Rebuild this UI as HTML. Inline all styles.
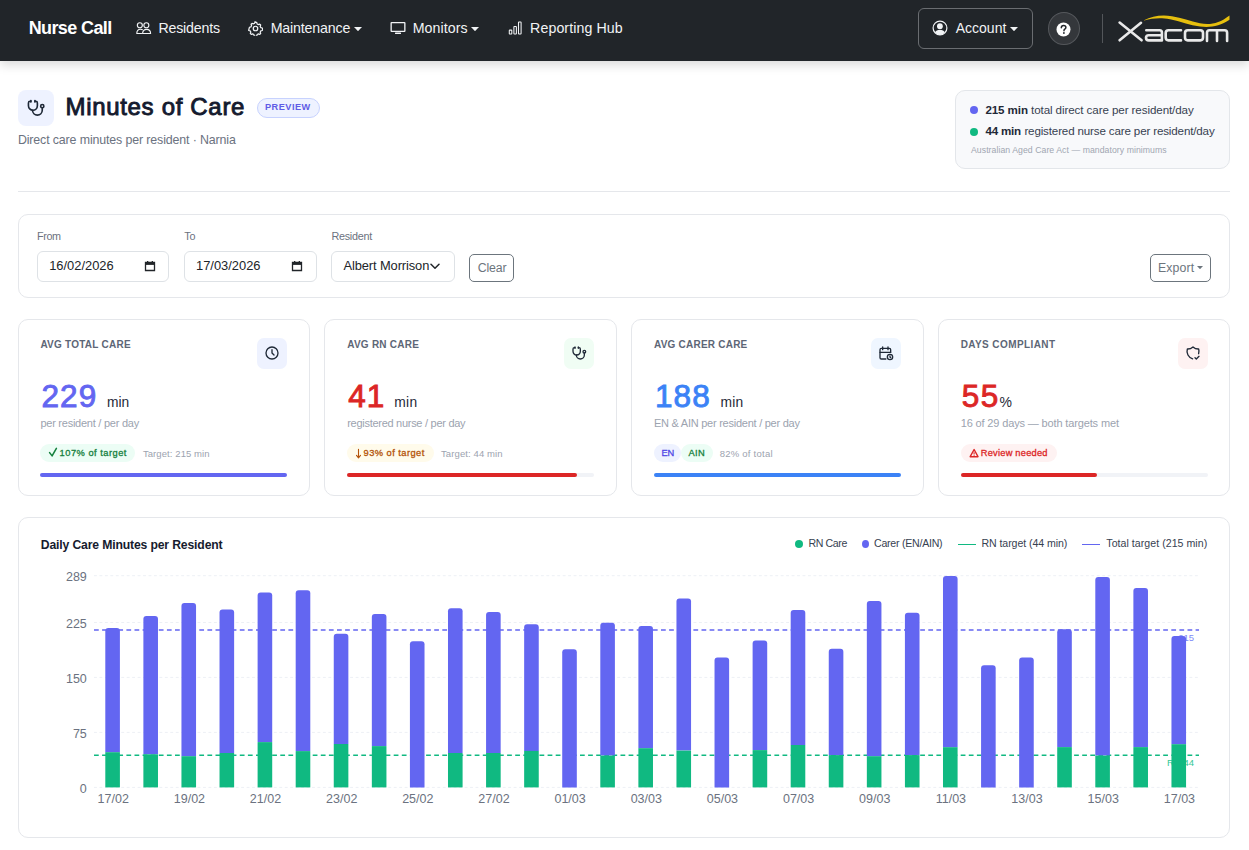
<!DOCTYPE html>
<html><head><meta charset="utf-8"><title>Minutes of Care</title>
<style>
html,body{margin:0;padding:0;background:#fff;width:1249px;height:850px;overflow:hidden}
body{position:relative;font-family:"Liberation Sans",sans-serif}
.t{position:absolute;white-space:nowrap}
.b{position:absolute;box-sizing:border-box}
</style></head><body>
<div class="b" style="left:0px;top:0px;width:1249px;height:61px;background:#212529;box-shadow:0 4px 10px rgba(0,0,0,.15);z-index:2"></div>
<div style="position:absolute;left:0;top:0;width:1249px;height:61px;z-index:3"><div class="t" style="left:28.70px;top:17.26px;font-size:18px;line-height:22px;color:#ffffff;font-weight:700;letter-spacing:-0.613px;">Nurse Call</div>
<svg class="b" style="left:130px;top:15px;" width="40" height="25" viewBox="0 0 40 25" fill="none"><g stroke="#f1f3f5" stroke-width="1.15" fill="none" stroke-linecap="round" stroke-linejoin="round"><circle cx="9.85" cy="10.25" r="2.5"/><circle cx="16.35" cy="10.25" r="2.5"/><path d="M12.6 18.5C12.6 15.7 14.4 14.3 16.6 14.3S20.6 15.7 20.6 18.5Z"/><path d="M11.6 18.5H6.8C6.8 16 8.4 14.3 10.6 14.3C11.3 14.3 11.9 14.45 12.4 14.7"/></g></svg>
<div class="t" style="left:158.40px;top:19.98px;font-size:14.2px;line-height:17px;color:#f1f3f5;letter-spacing:-0.183px;">Residents</div>
<svg class="b" style="left:248.3px;top:20.6px;" width="15" height="15" viewBox="0 0 16 16" fill="none"><g stroke="#f1f3f5" stroke-width="1.3" fill="none"><path d="M8 1.2l1.3.3.4 1.6 1.2.7 1.6-.5 1 1-.5 1.6.7 1.2 1.6.4.3 1.3-.3 1.3-1.6.4-.7 1.2.5 1.6-1 1-1.6-.5-1.2.7-.4 1.6-1.3.3-1.3-.3-.4-1.6-1.2-.7-1.6.5-1-1 .5-1.6-.7-1.2-1.6-.4L1.2 8l.3-1.3 1.6-.4.7-1.2-.5-1.6 1-1 1.6.5 1.2-.7.4-1.6z" stroke-linejoin="round"/><circle cx="8" cy="8" r="2.4"/></g></svg>
<div class="t" style="left:270.70px;top:19.98px;font-size:14.2px;line-height:17px;color:#f1f3f5;letter-spacing:-0.165px;">Maintenance</div>
<svg class="b" style="left:354.2px;top:26.6px;" width="8" height="4.4" viewBox="0 0 8 4.4" fill="none"><path d="M0 0H8L4 4.2z" fill="#f1f3f5"/></svg>
<svg class="b" style="left:390px;top:21px;" width="16" height="14" viewBox="0 0 16 14" fill="none"><g fill="#f1f3f5"><path d="M1.5 1h13a1 1 0 0 1 1 1v8a1 1 0 0 1-1 1h-13a1 1 0 0 1-1-1V2a1 1 0 0 1 1-1zm.3 1.3v7.4h12.4V2.3z"/><rect x="5" y="11.5" width="6" height="1.6" rx=".5"/></g></svg>
<div class="t" style="left:412.70px;top:19.98px;font-size:14.2px;line-height:17px;color:#f1f3f5;letter-spacing:0.081px;">Monitors</div>
<svg class="b" style="left:471.1px;top:26.6px;" width="8" height="4.4" viewBox="0 0 8 4.4" fill="none"><path d="M0 0H8L4 4.2z" fill="#f1f3f5"/></svg>
<svg class="b" style="left:508px;top:21px;" width="15" height="14" viewBox="0 0 15 14" fill="none"><g stroke="#f1f3f5" stroke-width="1.05" fill="none"><rect x="1.3" y="9.1" width="2.5" height="3.9" rx=".5"/><rect x="5.9" y="5.4" width="2.5" height="7.6" rx=".5"/><rect x="10.5" y="0.9" width="2.6" height="12.1" rx=".5"/></g></svg>
<div class="t" style="left:530.10px;top:19.98px;font-size:14.2px;line-height:17px;color:#f1f3f5;letter-spacing:0.087px;">Reporting Hub</div>
<div class="b" style="left:918px;top:8px;width:115px;height:41px;border:1px solid #6a6d71;border-radius:6px;box-sizing:border-box"></div>
<svg class="b" style="left:932.0px;top:20px;" width="16" height="16" viewBox="0 0 16 16" fill="none"><circle cx="8" cy="8" r="6.9" stroke="#f1f3f5" stroke-width="1.2" fill="none"/><circle cx="7.9" cy="6.2" r="2.9" fill="#f1f3f5"/><path d="M2.9 12.4C3.8 10.7 5.6 9.8 7.9 9.8S12 10.7 12.9 12.4A7 7 0 0 1 7.9 15A7 7 0 0 1 2.9 12.4z" fill="#f1f3f5"/></svg>
<div class="t" style="left:955.80px;top:20.05px;font-size:14px;line-height:17px;color:#f1f3f5;letter-spacing:-0.012px;">Account</div>
<svg class="b" style="left:1010.1px;top:26.6px;" width="8" height="4.4" viewBox="0 0 8 4.4" fill="none"><path d="M0 0H8L4 4.2z" fill="#f1f3f5"/></svg>
<div class="b" style="left:1048px;top:12px;width:32px;height:33px;border:1px solid #55585c;background:#34373b;border-radius:50%;box-sizing:border-box"></div>
<svg class="b" style="left:1056px;top:21.6px;" width="15" height="15" viewBox="0 0 15 15" fill="none"><circle cx="7.5" cy="7.5" r="7" fill="#fff"/><path d="M5.3 5.7c0-1.4 1-2.3 2.3-2.3 1.3 0 2.3.8 2.3 2 0 .9-.5 1.3-1.1 1.7-.6.4-.8.6-.8 1.3v.3" stroke="#212529" stroke-width="1.45" fill="none" stroke-linecap="round"/><circle cx="7.9" cy="11" r=".9" fill="#212529"/></svg>
<div class="b" style="left:1102px;top:14px;width:1px;height:29px;background:#53565a"></div>
<svg class="b" style="left:1112px;top:10px;" width="123" height="36" viewBox="0 0 123 36" fill="none"><path d="M32 10.3C40 6 50 4.6 60 6.3S78 11.2 88 13.2S107 13.5 117.5 5.4V9.8C108 16.5 98 17.8 88 16.6S68 11.2 58 9.3S41 8.2 32 10.6z" fill="#e6bf0e"/>
<g stroke="#e9e9e9" stroke-width="2.6" fill="none" stroke-linecap="round" stroke-linejoin="round">
<path d="M7.6 12.6L29.6 30.3M7.6 30.3L29 12.8"/>
<path d="M34.3 20.2H47.7Q49.9 20.2 49.9 22.4V30.4H36.8Q34 30.4 34 27.8Q34 25.2 36.8 25.2H49.9"/>
<path d="M69 20.2H56.4Q53.7 20.2 53.7 23V27.6Q53.7 30.4 56.4 30.4H69"/>
<path d="M75.7 20.2H88.3Q91 20.2 91 23V27.6Q91 30.4 88.3 30.4H75.7Q73 30.4 73 27.6V23Q73 20.2 75.7 20.2z"/>
<path d="M95 31V22.7Q95 20.2 97.5 20.2H112.6Q115.1 20.2 115.1 22.7V31M105 20.2V31"/>
</g></svg>
</div><div class="b" style="left:18px;top:90px;width:36px;height:36px;background:#eef2ff;border-radius:8px"></div>
<svg class="b" style="left:26.2px;top:97.7px;" width="19.5" height="19.5" viewBox="0 0 24 24" fill="none"><g stroke="#1f2937" stroke-width="2" fill="none" stroke-linecap="round" stroke-linejoin="round"><path d="M6 4h-1a2 2 0 0 0 -2 2v3.5a5.5 5.5 0 0 0 11 0v-3.5a2 2 0 0 0 -2 -2h-1"/><path d="M8 15a6 6 0 1 0 12 0v-3"/><path d="M11 3v2"/><path d="M6 3v2"/><circle cx="20" cy="10" r="2"/></g></svg>
<div class="t" style="left:65.50px;top:92.18px;font-size:24px;line-height:29px;color:#141a2e;letter-spacing:0.679px;-webkit-text-stroke:0.9px #141a2e;">Minutes of Care</div>
<div class="b" style="left:257px;top:98px;width:63px;height:20px;background:#eef2ff;border:1px solid #c7d2fe;border-radius:10px;box-sizing:border-box"></div>
<div class="t" style="left:265.00px;top:101.91px;font-size:9.2px;line-height:11px;color:#5f5ce6;font-weight:700;letter-spacing:0.481px;">PREVIEW</div>
<div class="t" style="left:17.90px;top:132.70px;font-size:12.4px;line-height:15px;color:#6b7280;letter-spacing:-0.129px;">Direct care minutes per resident · Narnia</div>
<div class="b" style="left:955px;top:90px;width:275px;height:79px;background:#f8f9fb;border:1px solid #e3e6ea;border-radius:10px;box-sizing:border-box"></div>
<div class="b" style="left:970px;top:106px;width:8px;height:8px;background:#6366f1;border-radius:50%"></div>
<div class="b" style="left:970px;top:128px;width:8px;height:8px;background:#10b981;border-radius:50%"></div>
<div class="t" style="left:985.40px;top:103.48px;font-size:11.6px;line-height:14px;color:#1f2937;font-weight:700;letter-spacing:-0.100px;">215 min</div>
<div class="t" style="left:1031.00px;top:103.48px;font-size:11.6px;line-height:14px;color:#374151;letter-spacing:-0.086px;">total direct care per resident/day</div>
<div class="t" style="left:985.40px;top:124.48px;font-size:11.6px;line-height:14px;color:#1f2937;font-weight:700;letter-spacing:-0.208px;">44 min</div>
<div class="t" style="left:1024.40px;top:124.48px;font-size:11.6px;line-height:14px;color:#374151;letter-spacing:-0.151px;">registered nurse care per resident/day</div>
<div class="t" style="left:971.00px;top:145.29px;font-size:8.7px;line-height:10px;color:#a0a6b1;letter-spacing:0.057px;">Australian Aged Care Act — mandatory minimums</div>
<div class="b" style="left:18px;top:191px;width:1212px;height:1px;background:#e5e7eb"></div>
<div class="b" style="left:18px;top:214px;width:1212px;height:84px;border:1px solid #e5e7eb;border-radius:10px;box-sizing:border-box"></div>
<div class="t" style="left:36.90px;top:230.46px;font-size:10.8px;line-height:13px;color:#6b7280;letter-spacing:-0.349px;">From</div>
<div class="t" style="left:184.20px;top:230.46px;font-size:10.8px;line-height:13px;color:#6b7280;">To</div>
<div class="t" style="left:331.40px;top:230.46px;font-size:10.8px;line-height:13px;color:#6b7280;letter-spacing:-0.241px;">Resident</div>
<div class="b" style="left:37px;top:251px;width:132px;height:31px;border:1px solid #dee2e6;border-radius:6px;box-sizing:border-box;background:#fff"></div>
<div class="b" style="left:184px;top:251px;width:133px;height:31px;border:1px solid #dee2e6;border-radius:6px;box-sizing:border-box;background:#fff"></div>
<div class="b" style="left:331px;top:251px;width:124px;height:31px;border:1px solid #dee2e6;border-radius:6px;box-sizing:border-box;background:#fff"></div>
<div class="t" style="left:49.20px;top:258.43px;font-size:12.9px;line-height:15px;color:#212529;">16/02/2026</div>
<svg class="b" style="left:143.5px;top:259.5px;" width="12" height="12" viewBox="0 0 12 12" fill="none"><path d="M1.5 2.5h9v8h-9z" stroke="#212529" stroke-width="1.3" fill="none"/><rect x="1.5" y="2.5" width="9" height="2.4" fill="#212529"/><rect x="3" y="1" width="1.3" height="2" fill="#212529"/><rect x="7.7" y="1" width="1.3" height="2" fill="#212529"/></svg>
<div class="t" style="left:196.00px;top:258.43px;font-size:12.9px;line-height:15px;color:#212529;">17/03/2026</div>
<svg class="b" style="left:290.5px;top:259.5px;" width="12" height="12" viewBox="0 0 12 12" fill="none"><path d="M1.5 2.5h9v8h-9z" stroke="#212529" stroke-width="1.3" fill="none"/><rect x="1.5" y="2.5" width="9" height="2.4" fill="#212529"/><rect x="3" y="1" width="1.3" height="2" fill="#212529"/><rect x="7.7" y="1" width="1.3" height="2" fill="#212529"/></svg>
<div class="t" style="left:343.50px;top:258.43px;font-size:12.9px;line-height:15px;color:#212529;letter-spacing:-0.111px;">Albert Morrison</div>
<svg class="b" style="left:429.5px;top:263px;" width="10" height="7" viewBox="0 0 10 7" fill="none"><path d="M1 1.2l4 4 4-4" stroke="#212529" stroke-width="1.5" fill="none" stroke-linecap="round" stroke-linejoin="round"/></svg>
<div class="b" style="left:469px;top:254px;width:45px;height:28px;border:1px solid #6c757d;border-radius:5px;box-sizing:border-box"></div>
<div class="t" style="left:477.80px;top:260.74px;font-size:12.3px;line-height:15px;color:#6c757d;letter-spacing:-0.159px;">Clear</div>
<div class="b" style="left:1150px;top:254px;width:61px;height:28px;border:1px solid #6c757d;border-radius:5px;box-sizing:border-box"></div>
<div class="t" style="left:1157.90px;top:260.74px;font-size:12.3px;line-height:15px;color:#6c757d;letter-spacing:0.158px;">Export</div>
<svg class="b" style="left:1197.2px;top:265.6px;" width="6" height="3.4" viewBox="0 0 6 3.4" fill="none"><path d="M0 0H6L3 3.2z" fill="#6c757d"/></svg>
<div class="b" style="left:18px;top:319px;width:292px;height:177px;border:1px solid #e5e7eb;border-radius:10px;box-sizing:border-box;background:#fff"></div>
<div class="t" style="left:40.40px;top:339.04px;font-size:10px;line-height:12px;color:#5d6676;font-weight:700;letter-spacing:0.240px;">AVG TOTAL CARE</div>
<div class="b" style="left:257px;top:338px;width:30px;height:31px;background:#eef2ff;border-radius:7px"></div>
<svg class="b" style="left:264.0px;top:344.6px;" width="16" height="16" viewBox="0 0 24 24" fill="none"><g stroke="#1f2937" stroke-width="2" fill="none" stroke-linecap="round" stroke-linejoin="round"><circle cx="12" cy="12" r="9"/><path d="M12 7v5l3 3"/></g></svg>
<div class="t" style="left:41.40px;top:377.39px;font-size:31.5px;line-height:38px;color:#6366f1;letter-spacing:1.147px;-webkit-text-stroke:0.9px #6366f1;">229</div>
<div class="t" style="left:107.00px;top:394.22px;font-size:13.8px;line-height:17px;color:#1f2937;letter-spacing:-0.046px;">min</div>
<div class="t" style="left:40.40px;top:416.89px;font-size:11px;line-height:13px;color:#9ca3af;letter-spacing:-0.248px;">per resident / per day</div>
<div class="b" style="left:40px;top:444px;width:95px;height:18px;background:#ecfdf5;border-radius:9px"></div>
<div class="t" style="left:59.60px;top:448.08px;font-size:9.3px;line-height:11px;color:#15803d;letter-spacing:0.486px;-webkit-text-stroke:0.3px #15803d;">107% of target</div>
<svg class="b" style="left:48px;top:447px;" width="10" height="10" viewBox="0 0 10 10" fill="none"><path d="M1.6 5.6L4.1 8.9L8.4 1.3" stroke="#15803d" stroke-width="1.55" fill="none" stroke-linecap="round" stroke-linejoin="round"/></svg>
<div class="t" style="left:142.90px;top:448.01px;font-size:9.5px;line-height:11px;color:#9ca3af;letter-spacing:0.088px;">Target: 215 min</div>
<div class="b" style="left:40px;top:473px;width:247px;height:4px;background:#6366f1;border-radius:2px"></div>
<div class="b" style="left:324px;top:319px;width:293px;height:177px;border:1px solid #e5e7eb;border-radius:10px;box-sizing:border-box;background:#fff"></div>
<div class="t" style="left:347.20px;top:339.04px;font-size:10px;line-height:12px;color:#5d6676;font-weight:700;letter-spacing:0.249px;">AVG RN CARE</div>
<div class="b" style="left:564px;top:338px;width:30px;height:31px;background:#f0fdf4;border-radius:7px"></div>
<svg class="b" style="left:571.3px;top:344.6px;" width="16" height="16" viewBox="0 0 24 24" fill="none"><g stroke="#1f2937" stroke-width="2" fill="none" stroke-linecap="round" stroke-linejoin="round"><path d="M6 4h-1a2 2 0 0 0 -2 2v3.5a5.5 5.5 0 0 0 11 0v-3.5a2 2 0 0 0 -2 -2h-1"/><path d="M8 15a6 6 0 1 0 12 0v-3"/><path d="M11 3v2"/><path d="M6 3v2"/><circle cx="20" cy="10" r="2"/></g></svg>
<div class="t" style="left:348.20px;top:377.39px;font-size:31.5px;line-height:38px;color:#dc2626;letter-spacing:0.981px;-webkit-text-stroke:0.9px #dc2626;">41</div>
<div class="t" style="left:394.30px;top:394.22px;font-size:13.8px;line-height:17px;color:#1f2937;letter-spacing:0.288px;">min</div>
<div class="t" style="left:347.20px;top:416.89px;font-size:11px;line-height:13px;color:#9ca3af;letter-spacing:-0.279px;">registered nurse / per day</div>
<div class="b" style="left:347px;top:444px;width:87px;height:18px;background:#fffbeb;border-radius:9px"></div>
<div class="t" style="left:363.60px;top:448.08px;font-size:9.3px;line-height:11px;color:#b45309;letter-spacing:0.452px;-webkit-text-stroke:0.3px #b45309;">93% of target</div>
<svg class="b" style="left:355px;top:448px;" width="7" height="11" viewBox="0 0 7 11" fill="none"><path d="M3.5 1.2V9.6M1.5 7.4L3.5 9.8L5.5 7.4" stroke="#b45309" stroke-width="1.1" fill="none" stroke-linecap="round" stroke-linejoin="round"/></svg>
<div class="t" style="left:441.00px;top:448.01px;font-size:9.5px;line-height:11px;color:#9ca3af;letter-spacing:0.107px;">Target: 44 min</div>
<div class="b" style="left:347px;top:473px;width:247px;height:4px;background:#f1f3f7;border-radius:2px"></div>
<div class="b" style="left:347px;top:473px;width:230px;height:4px;background:#dc2626;border-radius:2px"></div>
<div class="b" style="left:631px;top:319px;width:293px;height:177px;border:1px solid #e5e7eb;border-radius:10px;box-sizing:border-box;background:#fff"></div>
<div class="t" style="left:654.00px;top:339.04px;font-size:10px;line-height:12px;color:#5d6676;font-weight:700;letter-spacing:0.223px;">AVG CARER CARE</div>
<div class="b" style="left:871px;top:338px;width:30px;height:31px;background:#eff6ff;border-radius:7px"></div>
<svg class="b" style="left:878.0999999999999px;top:344.6px;" width="16" height="16" viewBox="0 0 24 24" fill="none"><g stroke="#1f2937" stroke-width="2" fill="none" stroke-linecap="round" stroke-linejoin="round"><path d="M11.8 21h-6.8a2 2 0 0 1 -2 -2v-12a2 2 0 0 1 2 -2h12a2 2 0 0 1 2 2v4"/><circle cx="18" cy="18" r="4"/><path d="M15 3v4"/><path d="M7 3v4"/><path d="M3 11h16"/><path d="M18 16.5v1.5l1 1"/></g></svg>
<div class="t" style="left:655.00px;top:377.39px;font-size:31.5px;line-height:38px;color:#3b82f6;letter-spacing:1.081px;-webkit-text-stroke:0.9px #3b82f6;">188</div>
<div class="t" style="left:720.60px;top:394.22px;font-size:13.8px;line-height:17px;color:#1f2937;letter-spacing:0.188px;">min</div>
<div class="t" style="left:654.00px;top:416.89px;font-size:11px;line-height:13px;color:#9ca3af;letter-spacing:-0.251px;">EN &amp; AIN per resident / per day</div>
<div class="b" style="left:654px;top:444px;width:27px;height:18px;background:#eef2ff;border-radius:9px"></div>
<div class="t" style="left:661.40px;top:448.08px;font-size:9.3px;line-height:11px;color:#4f46e5;letter-spacing:-0.210px;-webkit-text-stroke:0.3px #4f46e5;">EN</div>
<div class="b" style="left:681px;top:444px;width:32px;height:18px;background:#ecfdf5;border-radius:9px"></div>
<div class="t" style="left:688.50px;top:448.08px;font-size:9.3px;line-height:11px;color:#15803d;letter-spacing:0.399px;-webkit-text-stroke:0.3px #15803d;">AIN</div>
<div class="t" style="left:719.70px;top:448.01px;font-size:9.5px;line-height:11px;color:#9ca3af;letter-spacing:0.244px;">82% of total</div>
<div class="b" style="left:654px;top:473px;width:247px;height:4px;background:#3b82f6;border-radius:2px"></div>
<div class="b" style="left:938px;top:319px;width:292px;height:177px;border:1px solid #e5e7eb;border-radius:10px;box-sizing:border-box;background:#fff"></div>
<div class="t" style="left:960.70px;top:339.04px;font-size:10px;line-height:12px;color:#5d6676;font-weight:700;letter-spacing:0.408px;">DAYS COMPLIANT</div>
<div class="b" style="left:1178px;top:338px;width:30px;height:31px;background:#fef2f2;border-radius:7px"></div>
<svg class="b" style="left:1185.0px;top:344.6px;" width="16" height="16" viewBox="0 0 24 24" fill="none"><g stroke="#1f2937" stroke-width="2" fill="none" stroke-linecap="round" stroke-linejoin="round"><path d="M11.46 20.846a12 12 0 0 1 -7.96 -14.846a12 12 0 0 0 8.5 -3a12 12 0 0 0 8.5 3a12 12 0 0 1 -.09 7.06"/><path d="M15 19l2 2l4 -4"/></g></svg>
<div class="t" style="left:961.70px;top:377.39px;font-size:31.5px;line-height:38px;color:#dc2626;letter-spacing:1.631px;-webkit-text-stroke:0.9px #dc2626;">55</div>
<div class="t" style="left:999.50px;top:394.15px;font-size:14px;line-height:17px;color:#1f2937;letter-spacing:0.352px;">%</div>
<div class="t" style="left:960.70px;top:416.89px;font-size:11px;line-height:13px;color:#9ca3af;letter-spacing:-0.142px;">16 of 29 days — both targets met</div>
<div class="b" style="left:961px;top:444px;width:96px;height:18px;background:#fef2f2;border-radius:9px"></div>
<div class="t" style="left:980.80px;top:448.08px;font-size:9.3px;line-height:11px;color:#dc2626;letter-spacing:0.214px;-webkit-text-stroke:0.3px #dc2626;">Review needed</div>
<svg class="b" style="left:968.5px;top:447.5px;" width="10.5" height="10" viewBox="0 0 10.5 10" fill="none"><path d="M5.1 1.5L9.0 8.7H1.2z" stroke="#dc2626" stroke-width="1.4" fill="none" stroke-linejoin="round"/><path d="M5.1 4.3V6.5" stroke="#dc2626" stroke-width="1.1"/><circle cx="5.1" cy="7.6" r=".55" fill="#dc2626"/></svg>
<div class="b" style="left:961px;top:473px;width:247px;height:4px;background:#f1f3f7;border-radius:2px"></div>
<div class="b" style="left:961px;top:473px;width:136px;height:4px;background:#dc2626;border-radius:2px"></div>
<div class="b" style="left:18px;top:517px;width:1212px;height:321px;border:1px solid #e5e7eb;border-radius:10px;box-sizing:border-box;background:#fff"></div>
<div class="t" style="left:40.80px;top:537.97px;font-size:12.2px;line-height:15px;color:#161b2e;font-weight:700;letter-spacing:-0.147px;">Daily Care Minutes per Resident</div>
<div class="b" style="left:795px;top:540px;width:8px;height:8px;background:#10b981;border-radius:50%"></div>
<div class="t" style="left:808.50px;top:537.23px;font-size:10.6px;line-height:13px;color:#374151;letter-spacing:-0.390px;">RN Care</div>
<div class="b" style="left:862px;top:540px;width:7px;height:8px;background:#6366f1;border-radius:50%"></div>
<div class="t" style="left:874.00px;top:537.23px;font-size:10.6px;line-height:13px;color:#374151;letter-spacing:-0.247px;">Carer (EN/AIN)</div>
<div class="b" style="left:958px;top:544px;width:18px;height:1px;background:#10b981"></div>
<div class="t" style="left:981.40px;top:537.23px;font-size:10.6px;line-height:13px;color:#374151;letter-spacing:-0.066px;">RN target (44 min)</div>
<div class="b" style="left:1082px;top:544px;width:18px;height:1px;background:#6366f1"></div>
<div class="t" style="left:1106.30px;top:537.23px;font-size:10.6px;line-height:13px;color:#374151;letter-spacing:0.038px;">Total target (215 min)</div>
<svg class="b" style="left:0;top:0" width="1249" height="850" viewBox="0 0 1249 850"><line x1="94" y1="575.7" x2="1199" y2="575.7" stroke="#edf0f5" stroke-width="1" stroke-dasharray="2.9 2.55"/><line x1="94" y1="622.5" x2="1199" y2="622.5" stroke="#edf0f5" stroke-width="1" stroke-dasharray="2.9 2.55"/><line x1="94" y1="677.4" x2="1199" y2="677.4" stroke="#edf0f5" stroke-width="1" stroke-dasharray="2.9 2.55"/><line x1="94" y1="732.4" x2="1199" y2="732.4" stroke="#edf0f5" stroke-width="1" stroke-dasharray="2.9 2.55"/><line x1="94" y1="787.4" x2="1199" y2="787.4" stroke="#edf0f5" stroke-width="1" stroke-dasharray="2.9 2.55"/><line x1="94" y1="630.1" x2="1199" y2="630.1" stroke="#6366f1" stroke-width="1.5" stroke-dasharray="4.75 3.35"/><line x1="94" y1="755.2" x2="1199" y2="755.2" stroke="#10b981" stroke-width="1.5" stroke-dasharray="4.75 3.35"/><text x="1194" y="641" font-family="Liberation Sans" font-size="9.5" fill="#818cf8" text-anchor="end">215</text><text x="1194" y="766" font-family="Liberation Sans" font-size="9.5" fill="#34c796" text-anchor="end">RN 44</text><path d="M105.30 752.20V631.00Q105.30 628.00 108.30 628.00H116.90Q119.90 628.00 119.90 631.00V752.20z" fill="#6366f1"/><rect x="105.30" y="752.20" width="14.6" height="35.20" fill="#10b981"/><path d="M143.38 754.30V619.10Q143.38 616.10 146.38 616.10H154.98Q157.98 616.10 157.98 619.10V754.30z" fill="#6366f1"/><rect x="143.38" y="754.30" width="14.6" height="33.10" fill="#10b981"/><path d="M181.45 756.20V605.90Q181.45 602.90 184.45 602.90H193.05Q196.05 602.90 196.05 605.90V756.20z" fill="#6366f1"/><rect x="181.45" y="756.20" width="14.6" height="31.20" fill="#10b981"/><path d="M219.53 753.00V612.50Q219.53 609.50 222.53 609.50H231.13Q234.13 609.50 234.13 612.50V753.00z" fill="#6366f1"/><rect x="219.53" y="753.00" width="14.6" height="34.40" fill="#10b981"/><path d="M257.61 742.10V595.50Q257.61 592.50 260.61 592.50H269.21Q272.21 592.50 272.21 595.50V742.10z" fill="#6366f1"/><rect x="257.61" y="742.10" width="14.6" height="45.30" fill="#10b981"/><path d="M295.69 751.10V593.20Q295.69 590.20 298.69 590.20H307.29Q310.29 590.20 310.29 593.20V751.10z" fill="#6366f1"/><rect x="295.69" y="751.10" width="14.6" height="36.30" fill="#10b981"/><path d="M333.76 744.00V636.80Q333.76 633.80 336.76 633.80H345.36Q348.36 633.80 348.36 636.80V744.00z" fill="#6366f1"/><rect x="333.76" y="744.00" width="14.6" height="43.40" fill="#10b981"/><path d="M371.84 746.10V617.00Q371.84 614.00 374.84 614.00H383.44Q386.44 614.00 386.44 617.00V746.10z" fill="#6366f1"/><rect x="371.84" y="746.10" width="14.6" height="41.30" fill="#10b981"/><path d="M409.92 787.40V644.20Q409.92 641.20 412.92 641.20H421.52Q424.52 641.20 424.52 644.20V787.40z" fill="#6366f1"/><path d="M447.99 753.00V611.20Q447.99 608.20 450.99 608.20H459.59Q462.59 608.20 462.59 611.20V753.00z" fill="#6366f1"/><rect x="447.99" y="753.00" width="14.6" height="34.40" fill="#10b981"/><path d="M486.07 753.00V614.90Q486.07 611.90 489.07 611.90H497.67Q500.67 611.90 500.67 614.90V753.00z" fill="#6366f1"/><rect x="486.07" y="753.00" width="14.6" height="34.40" fill="#10b981"/><path d="M524.15 750.90V627.30Q524.15 624.30 527.15 624.30H535.75Q538.75 624.30 538.75 627.30V750.90z" fill="#6366f1"/><rect x="524.15" y="750.90" width="14.6" height="36.50" fill="#10b981"/><path d="M562.22 787.40V652.20Q562.22 649.20 565.22 649.20H573.82Q576.82 649.20 576.82 652.20V787.40z" fill="#6366f1"/><path d="M600.30 755.60V625.70Q600.30 622.70 603.30 622.70H611.90Q614.90 622.70 614.90 625.70V755.60z" fill="#6366f1"/><rect x="600.30" y="755.60" width="14.6" height="31.80" fill="#10b981"/><path d="M638.38 748.20V628.90Q638.38 625.90 641.38 625.90H649.98Q652.98 625.90 652.98 628.90V748.20z" fill="#6366f1"/><rect x="638.38" y="748.20" width="14.6" height="39.20" fill="#10b981"/><path d="M676.46 750.60V601.60Q676.46 598.60 679.46 598.60H688.06Q691.06 598.60 691.06 601.60V750.60z" fill="#6366f1"/><rect x="676.46" y="750.60" width="14.6" height="36.80" fill="#10b981"/><path d="M714.53 787.40V660.40Q714.53 657.40 717.53 657.40H726.13Q729.13 657.40 729.13 660.40V787.40z" fill="#6366f1"/><path d="M752.61 750.10V643.50Q752.61 640.50 755.61 640.50H764.21Q767.21 640.50 767.21 643.50V750.10z" fill="#6366f1"/><rect x="752.61" y="750.10" width="14.6" height="37.30" fill="#10b981"/><path d="M790.69 745.00V613.00Q790.69 610.00 793.69 610.00H802.29Q805.29 610.00 805.29 613.00V745.00z" fill="#6366f1"/><rect x="790.69" y="745.00" width="14.6" height="42.40" fill="#10b981"/><path d="M828.76 755.10V651.70Q828.76 648.70 831.76 648.70H840.36Q843.36 648.70 843.36 651.70V755.10z" fill="#6366f1"/><rect x="828.76" y="755.10" width="14.6" height="32.30" fill="#10b981"/><path d="M866.84 756.20V604.00Q866.84 601.00 869.84 601.00H878.44Q881.44 601.00 881.44 604.00V756.20z" fill="#6366f1"/><rect x="866.84" y="756.20" width="14.6" height="31.20" fill="#10b981"/><path d="M904.92 755.10V615.70Q904.92 612.70 907.92 612.70H916.52Q919.52 612.70 919.52 615.70V755.10z" fill="#6366f1"/><rect x="904.92" y="755.10" width="14.6" height="32.30" fill="#10b981"/><path d="M942.99 747.20V579.10Q942.99 576.10 945.99 576.10H954.59Q957.59 576.10 957.59 579.10V747.20z" fill="#6366f1"/><rect x="942.99" y="747.20" width="14.6" height="40.20" fill="#10b981"/><path d="M981.07 787.40V668.30Q981.07 665.30 984.07 665.30H992.67Q995.67 665.30 995.67 668.30V787.40z" fill="#6366f1"/><path d="M1019.15 787.40V660.40Q1019.15 657.40 1022.15 657.40H1030.75Q1033.75 657.40 1033.75 660.40V787.40z" fill="#6366f1"/><path d="M1057.22 747.10V632.30Q1057.22 629.30 1060.22 629.30H1068.82Q1071.82 629.30 1071.82 632.30V747.10z" fill="#6366f1"/><rect x="1057.22" y="747.10" width="14.6" height="40.30" fill="#10b981"/><path d="M1095.30 755.60V579.90Q1095.30 576.90 1098.30 576.90H1106.90Q1109.90 576.90 1109.90 579.90V755.60z" fill="#6366f1"/><rect x="1095.30" y="755.60" width="14.6" height="31.80" fill="#10b981"/><path d="M1133.38 747.10V591.00Q1133.38 588.00 1136.38 588.00H1144.98Q1147.98 588.00 1147.98 591.00V747.10z" fill="#6366f1"/><rect x="1133.38" y="747.10" width="14.6" height="40.30" fill="#10b981"/><path d="M1171.46 744.20V638.90Q1171.46 635.90 1174.46 635.90H1183.06Q1186.06 635.90 1186.06 638.90V744.20z" fill="#6366f1"/><rect x="1171.46" y="744.20" width="14.6" height="43.20" fill="#10b981"/><text x="86.8" y="581.0" font-family="Liberation Sans" font-size="12.5" fill="#6b7280" text-anchor="end">289</text><text x="86.8" y="627.8" font-family="Liberation Sans" font-size="12.5" fill="#6b7280" text-anchor="end">225</text><text x="86.8" y="682.7" font-family="Liberation Sans" font-size="12.5" fill="#6b7280" text-anchor="end">150</text><text x="86.8" y="737.7" font-family="Liberation Sans" font-size="12.5" fill="#6b7280" text-anchor="end">75</text><text x="86.8" y="792.7" font-family="Liberation Sans" font-size="12.5" fill="#6b7280" text-anchor="end">0</text><text x="113.2" y="803" font-family="Liberation Sans" font-size="12.5" fill="#6b7280" text-anchor="middle">17/02</text><text x="189.4" y="803" font-family="Liberation Sans" font-size="12.5" fill="#6b7280" text-anchor="middle">19/02</text><text x="265.5" y="803" font-family="Liberation Sans" font-size="12.5" fill="#6b7280" text-anchor="middle">21/02</text><text x="341.7" y="803" font-family="Liberation Sans" font-size="12.5" fill="#6b7280" text-anchor="middle">23/02</text><text x="417.8" y="803" font-family="Liberation Sans" font-size="12.5" fill="#6b7280" text-anchor="middle">25/02</text><text x="494.0" y="803" font-family="Liberation Sans" font-size="12.5" fill="#6b7280" text-anchor="middle">27/02</text><text x="570.1" y="803" font-family="Liberation Sans" font-size="12.5" fill="#6b7280" text-anchor="middle">01/03</text><text x="646.3" y="803" font-family="Liberation Sans" font-size="12.5" fill="#6b7280" text-anchor="middle">03/03</text><text x="722.4" y="803" font-family="Liberation Sans" font-size="12.5" fill="#6b7280" text-anchor="middle">05/03</text><text x="798.6" y="803" font-family="Liberation Sans" font-size="12.5" fill="#6b7280" text-anchor="middle">07/03</text><text x="874.7" y="803" font-family="Liberation Sans" font-size="12.5" fill="#6b7280" text-anchor="middle">09/03</text><text x="950.9" y="803" font-family="Liberation Sans" font-size="12.5" fill="#6b7280" text-anchor="middle">11/03</text><text x="1027.0" y="803" font-family="Liberation Sans" font-size="12.5" fill="#6b7280" text-anchor="middle">13/03</text><text x="1103.2" y="803" font-family="Liberation Sans" font-size="12.5" fill="#6b7280" text-anchor="middle">15/03</text><text x="1179.4" y="803" font-family="Liberation Sans" font-size="12.5" fill="#6b7280" text-anchor="middle">17/03</text></svg>

</body></html>
